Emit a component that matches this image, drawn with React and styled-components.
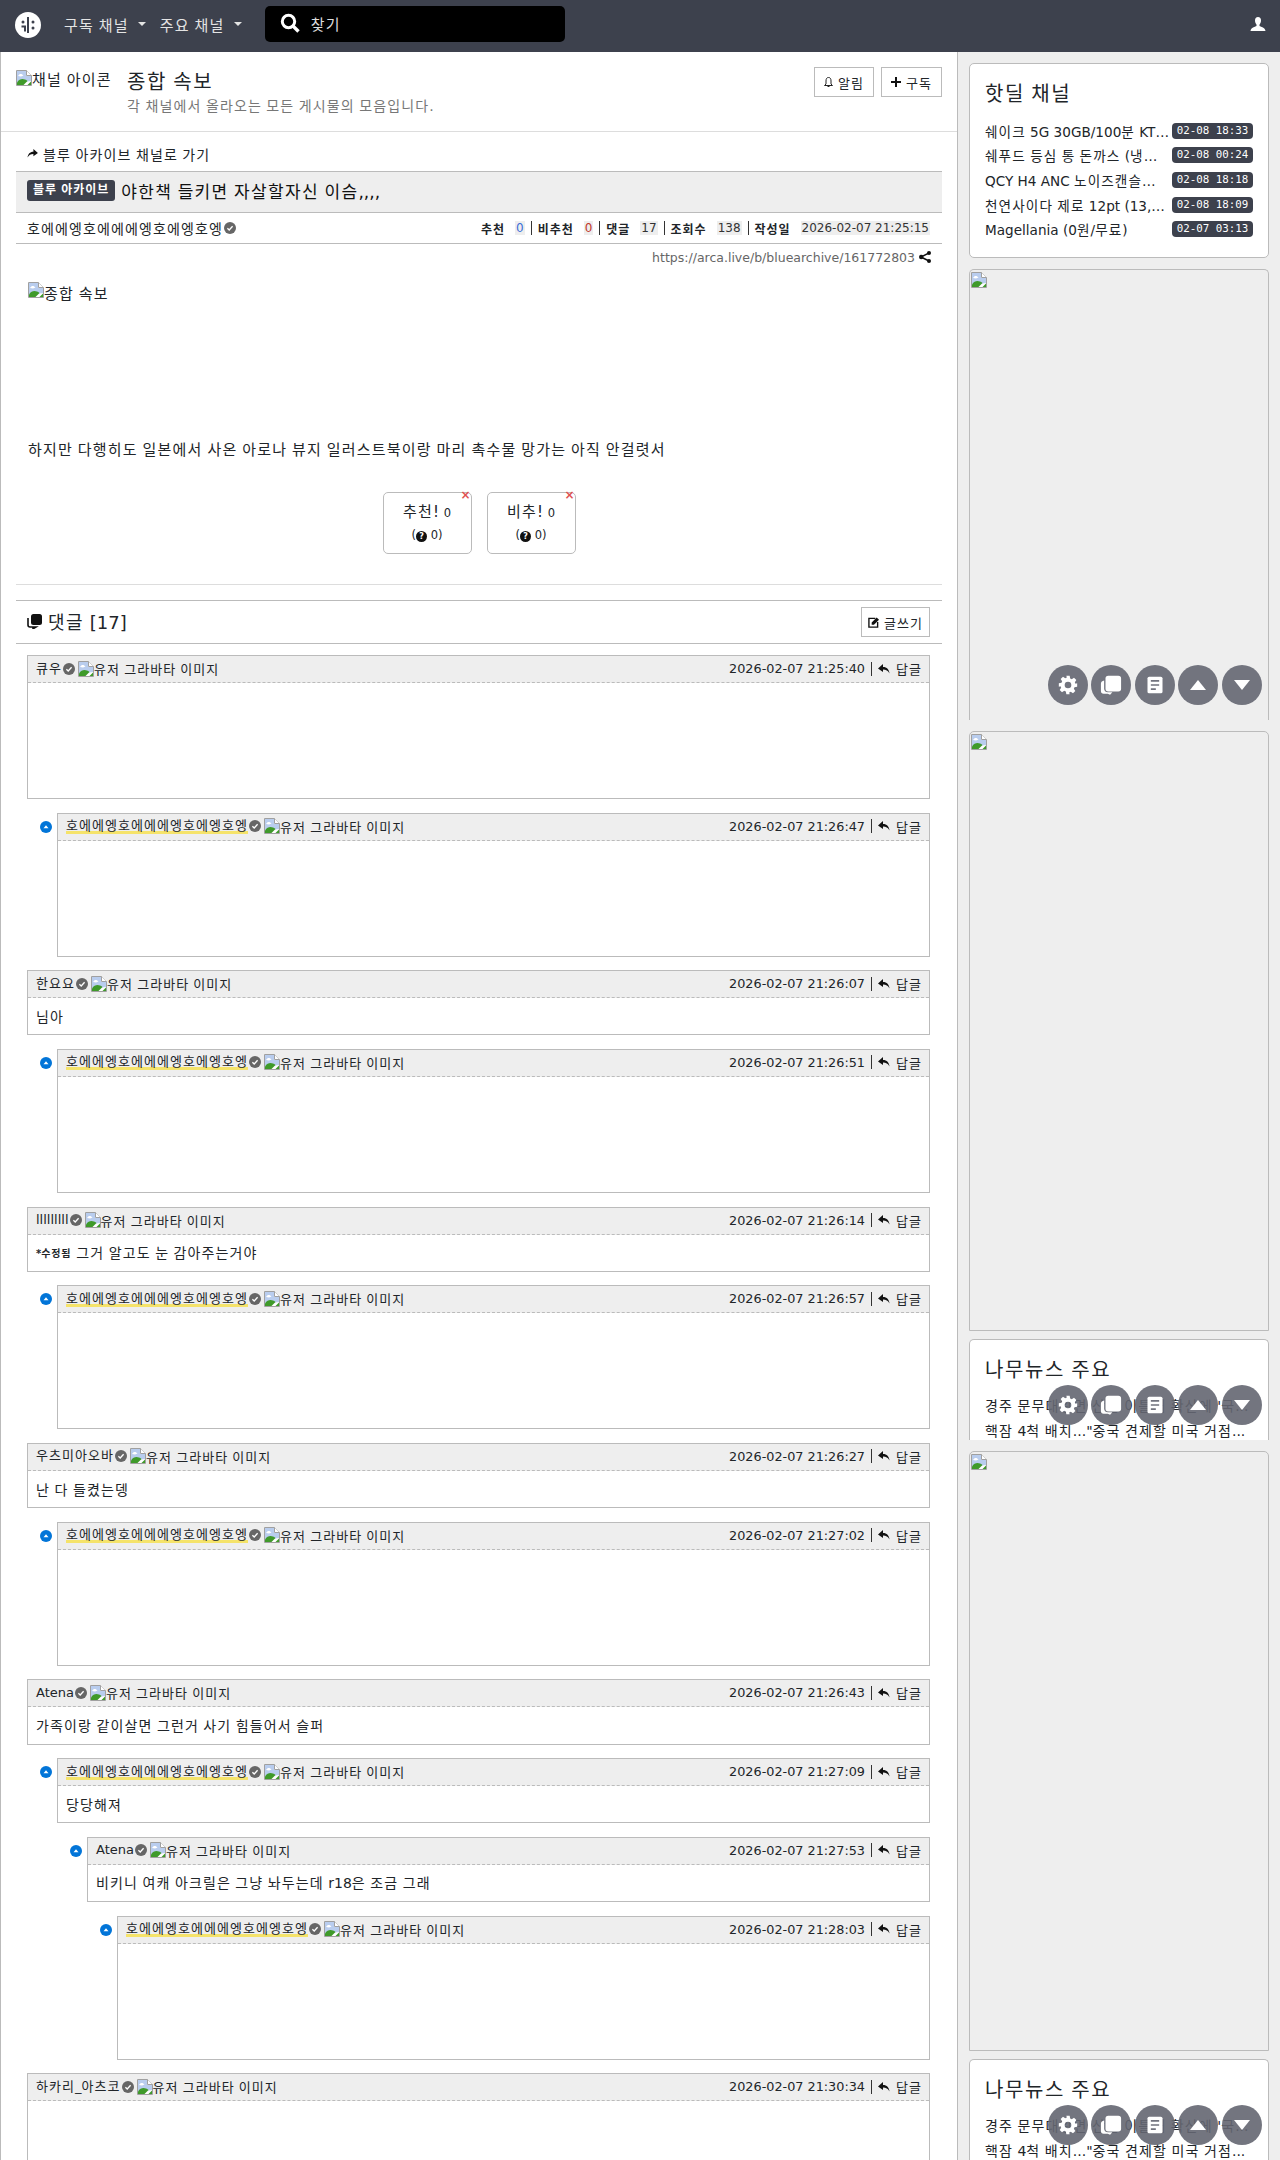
import React from "react"
import styled, { createGlobalStyle } from "styled-components"

const GlobalStyle = createGlobalStyle`
  html, body {
    margin: 0;
    padding: 0;
    background: #eee;
  }
  body {
    font-family: "DejaVu Sans", "Noto Sans CJK KR", sans-serif;
    font-size: 14px;
    color: #212529;
    overflow: hidden;
  }
  * {
    box-sizing: border-box;
  }
`

const hotdeals = [
  { title: "쉐이크 5G 30GB/100분 KT 알뜰폰 요금제", date: "02-08 18:33" },
  { title: "쉐푸드 등심 통 돈까스 (냉동) 2kg 특가", date: "02-08 00:24" },
  { title: "QCY H4 ANC 노이즈캔슬링 헤드폰 직구", date: "02-08 18:18" },
  { title: "천연사이다 제로 12pt (13,900원/무료)", date: "02-08 18:09" },
  { title: "Magellania (0원/무료)", date: "02-07 03:13" },
]

const comments = [
  { name: "큐우", date: "2026-02-07 21:25:40", depth: 0 },
  { name: "호에에엥호에에에엥호에엥호엥", date: "2026-02-07 21:26:47", depth: 1, me: true },
  { name: "한요요", date: "2026-02-07 21:26:07", depth: 0, text: "님아" },
  { name: "호에에엥호에에에엥호에엥호엥", date: "2026-02-07 21:26:51", depth: 1, me: true },
  { name: "lllllllll", date: "2026-02-07 21:26:14", depth: 0, text: "그거 알고도 눈 감아주는거야", edited: true },
  { name: "호에에엥호에에에엥호에엥호엥", date: "2026-02-07 21:26:57", depth: 1, me: true },
  { name: "우츠미아오바", date: "2026-02-07 21:26:27", depth: 0, text: "난 다 들켰는뎅" },
  { name: "호에에엥호에에에엥호에엥호엥", date: "2026-02-07 21:27:02", depth: 1, me: true },
  { name: "Atena", date: "2026-02-07 21:26:43", depth: 0, text: "가족이랑 같이살면 그런거 사기 힘들어서 슬퍼" },
  { name: "호에에엥호에에에엥호에엥호엥", date: "2026-02-07 21:27:09", depth: 1, me: true, text: "당당해져" },
  { name: "Atena", date: "2026-02-07 21:27:53", depth: 2, text: "비키니 여캐 아크릴은 그냥 놔두는데 r18은 조금 그래" },
  { name: "호에에엥호에에에엥호에엥호엥", date: "2026-02-07 21:28:03", depth: 3, me: true },
  { name: "하카리_아츠코", date: "2026-02-07 21:30:34", depth: 0 },
]

// the hangul in the screenshot sits on a full em, Noto's is narrower
const Ko = ({ children }) => (
  <span>
    {children.split(/([가-힣]+)/).map((part, i) =>
      i % 2 ? <Hangul key={i}>{part}</Hangul> : part
    )}
  </span>
)

const BrokenImage = () => (
  <BrokenIcon viewBox="0 0 16 16">
    <path d="M0.5 0.5H10.5L15.5 5.5V15.5H0.5Z" fill="#fff" stroke="#a0a0a0" />
    <path d="M1 1H10V6H15V11L1 13Z" fill="#b9cdee" />
    <path d="M2 6C3.5 3 6 3.5 7.5 5.5L5 6.5Z" fill="#fff" />
    <path d="M1 15V12.5C4 8 8 8.5 11.5 11L7.5 15Z" fill="#3f9a2a" />
    <path d="M11.5 15L15 11.5V15Z" fill="#3f9a2a" />
    <path d="M10.5 0.5V5.5H15.5" fill="#fff" stroke="#a0a0a0" />
  </BrokenIcon>
)

const VerifiedIcon = () => (
  <CheckIcon viewBox="0 0 12 12">
    <circle cx="6" cy="6" r="6" fill="#666" />
    <path d="M3.4 6.2L5.2 8L8.6 4.2" fill="none" stroke="#fff" strokeWidth="1.3" />
  </CheckIcon>
)

const Floating = () => (
  <FloatBar>
    <FloatButton>
      <svg width="20" height="20" viewBox="0 0 24 24">
        <path
          fill="#fff"
          fillRule="evenodd"
          d="M10 1h4l.6 3.2 1.9.8 2.7-1.8 2.8 2.8-1.8 2.7.8 1.9L23 10v4l-3.2.6-.8 1.9 1.8 2.7-2.8 2.8-2.7-1.8-1.9.8L14 23h-4l-.6-3.2-1.9-.8-2.7 1.8-2.8-2.8 1.8-2.7-.8-1.9L1 14v-4l3.2-.6.8-1.9-1.8-2.7 2.8-2.8 2.7 1.8 1.9-.8zM12 8a4 4 0 1 0 0 8 4 4 0 0 0 0-8z"
        />
      </svg>
    </FloatButton>
    <FloatButton>
      <svg width="22" height="22" viewBox="0 0 24 24">
        <rect x="6" y="2" width="17" height="17" rx="3" fill="#fff" />
        <path d="M4.5 7v9c0 2 1.5 4 4 4h5l-2.5 2.5-2.5-1H4c-2 0-3-1-3-3v-8c0-2 1.5-3 3.5-3.5z" fill="#fff" />
      </svg>
    </FloatButton>
    <FloatButton>
      <svg width="20" height="20" viewBox="0 0 24 24">
        <rect x="3" y="2" width="18" height="20" rx="2" fill="#fff" />
        <path d="M7 7h10M7 12h10M7 17h6" stroke="#72747f" strokeWidth="2" />
      </svg>
    </FloatButton>
    <FloatButton>
      <svg width="18" height="12" viewBox="0 0 18 12">
        <path d="M9 1L17 11H1Z" fill="#fff" />
      </svg>
    </FloatButton>
    <FloatButton>
      <svg width="18" height="12" viewBox="0 0 18 12">
        <path d="M1 1H17L9 11Z" fill="#fff" />
      </svg>
    </FloatButton>
  </FloatBar>
)

const ReplyHead = ({ date }) => (
  <HeadRight>
    <DateText>{date}</DateText>
    <Divider />
    <svg width="12" height="10" viewBox="0 0 12 10">
      <path d="M5 0L0 4.5L5 8V5.5C8 5.5 10 6.5 11.5 9.5C11 5.5 9 3 5 3Z" fill="#111" />
    </svg>
    <Ko>답글</Ko>
  </HeadRight>
)

const Comment = ({ comment }) => (
  <CommentRow $depth={comment.depth}>
    {comment.depth > 0 && (
      <Bullet viewBox="0 0 12 12">
        <circle cx="6" cy="6" r="6" fill="#0275d8" />
        <path d="M3.5 7.3L6 4.3L8.5 7.3Z" fill="#fff" />
      </Bullet>
    )}
    <CommentBox>
      <CommentHead>
        <HeadLeft>
          <UserName $me={comment.me}>
            <Ko>{comment.name}</Ko>
          </UserName>
          <VerifiedIcon />
          <Avatar>
            <BrokenImage />
            <Ko>유저 그라바타 이미지</Ko>
          </Avatar>
        </HeadLeft>
        <ReplyHead date={comment.date} />
      </CommentHead>
      <CommentBody $blank={!comment.text}>
        {comment.edited && <Edited><Ko>*수정됨</Ko></Edited>}
        {comment.text && <Ko>{comment.text}</Ko>}
      </CommentBody>
    </CommentBox>
  </CommentRow>
)

const NewsCard = ({ children }) => (
  <Card $clip $height={101}>
    <CardTitle><Ko>나무뉴스 주요</Ko></CardTitle>
    <NewsItem><Ko>경주 문무대왕면 산불 이틀째 확산에 '국...</Ko></NewsItem>
    <NewsItem><Ko>핵잠 4척 배치..."중국 견제할 미국 거점...</Ko></NewsItem>
    {children}
  </Card>
)

export default function App() {
  return (
    <Page>
      <GlobalStyle />
      <Nav>
        <Logo viewBox="0 0 26 26">
          <circle cx="13" cy="13" r="13" fill="#fff" />
          <path d="M13 5v16" stroke="#3d414d" strokeWidth="2" />
          <path d="M6.5 14.5h3.5v5" fill="none" stroke="#3d414d" strokeWidth="2" />
          <circle cx="8" cy="10" r="1.5" fill="#3d414d" />
          <circle cx="18" cy="10" r="1.5" fill="#3d414d" />
          <circle cx="18" cy="16" r="1.5" fill="#3d414d" />
        </Logo>
        <NavMenu><Ko>구독 채널</Ko><Caret /></NavMenu>
        <NavMenu><Ko>주요 채널</Ko><Caret /></NavMenu>
        <Search>
          <svg width="20" height="20" viewBox="0 0 20 20">
            <circle cx="8.5" cy="8.5" r="6.2" fill="none" stroke="#fff" strokeWidth="3" />
            <path d="M13 13L18.5 18.5" stroke="#fff" strokeWidth="3.4" />
          </svg>
          <Ko>찾기</Ko>
        </Search>
        <UserIcon viewBox="0 0 16 14">
          <path
            d="M8 0C10 0 11 1.5 11 3.5C11 5.5 10 7 9.5 7.5V9C11 10 15 10 15.5 14H0.5C1 10 5 10 6.5 9V7.5C6 7 5 5.5 5 3.5C5 1.5 6 0 8 0Z"
            fill="#fff"
          />
        </UserIcon>
      </Nav>
      <Columns>
        <Main>
          <ChannelHeader>
            <ChannelIcon>
              <BrokenImage />
              <Ko>채널 아이콘</Ko>
            </ChannelIcon>
            <ChannelText>
              <ChannelTitle><Ko>종합 속보</Ko></ChannelTitle>
              <ChannelDesc><Ko>각 채널에서 올라오는 모든 게시물의 모음입니다.</Ko></ChannelDesc>
            </ChannelText>
            <ChannelButtons>
              <OutlineButton $pad={9}>
                <svg width="9" height="11" viewBox="0 0 9 11">
                  <path
                    d="M4.5 .5C6.5 .5 7 2 7 4V7L8.5 8.5H.5L2 7V4C2 2 2.5 .5 4.5 .5ZM3.5 9.5H5.5"
                    fill="none"
                    stroke="#222"
                  />
                </svg>
                <Ko>알림</Ko>
              </OutlineButton>
              <OutlineButton $pad={9}>
                <svg width="10" height="10" viewBox="0 0 10 10">
                  <path d="M5 0V10M0 5H10" stroke="#111" strokeWidth="2" />
                </svg>
                <Ko>구독</Ko>
              </OutlineButton>
            </ChannelButtons>
          </ChannelHeader>
          <Article>
            <BackLink>
              <svg width="11" height="9" viewBox="0 0 12 10">
                <path d="M7 0L12 4.5L7 8V5.5C4 5.5 2 6.5 .5 9.5C1 5.5 3 3 7 3Z" fill="#111" />
              </svg>
              <Ko>블루 아카이브 채널로 가기</Ko>
            </BackLink>
            <TitleBar>
              <Badge><Ko>블루 아카이브</Ko></Badge>
              <ArticleTitle><Ko>야한책 들키면 자살할자신 이슴,,,,</Ko></ArticleTitle>
            </TitleBar>
            <InfoRow>
              <Author>
                <Ko>호에에엥호에에에엥호에엥호엥</Ko>
                <VerifiedIcon />
              </Author>
              <Stats>
                <StatLabel><Ko>추천</Ko></StatLabel>
                <StatValue $color="#3d6fd8">0</StatValue>
                <Divider />
                <StatLabel><Ko>비추천</Ko></StatLabel>
                <StatValue $color="#c0392b">0</StatValue>
                <Divider />
                <StatLabel><Ko>댓글</Ko></StatLabel>
                <StatValue>17</StatValue>
                <Divider />
                <StatLabel><Ko>조회수</Ko></StatLabel>
                <StatValue>138</StatValue>
                <Divider />
                <StatLabel><Ko>작성일</Ko></StatLabel>
                <StatValue>2026-02-07 21:25:15</StatValue>
              </Stats>
            </InfoRow>
            <UrlRow>
              https://arca.live/b/bluearchive/161772803
              <svg width="12" height="12" viewBox="0 0 12 12">
                <circle cx="2.2" cy="6" r="2.2" fill="#111" />
                <circle cx="10" cy="2" r="2" fill="#111" />
                <circle cx="10" cy="10" r="2" fill="#111" />
                <path d="M2 6L10 2M2 6L10 10" stroke="#111" strokeWidth="1.4" />
              </svg>
            </UrlRow>
            <ArticleBody>
              <ArticleImage>
                <BrokenImage />
                <Ko>종합 속보</Ko>
              </ArticleImage>
              <ArticleText>
                <Ko>하지만 다행히도 일본에서 사온 아로나 뷰지 일러스트북이랑 마리 촉수물 망가는 아직 안걸렷서</Ko>
              </ArticleText>
            </ArticleBody>
            <Votes>
              <VoteButton>
                <CloseMark>×</CloseMark>
                <VoteMain><Ko>추천!</Ko> <small>0</small></VoteMain>
                <VoteSub>(<HelpDot>?</HelpDot> 0)</VoteSub>
              </VoteButton>
              <VoteButton>
                <CloseMark>×</CloseMark>
                <VoteMain><Ko>비추!</Ko> <small>0</small></VoteMain>
                <VoteSub>(<HelpDot>?</HelpDot> 0)</VoteSub>
              </VoteButton>
            </Votes>
            <Rule />
            <CommentTitleBar>
              <CommentTitle>
                <svg width="15" height="15" viewBox="0 0 15 15">
                  <rect x="4" y="0" width="11" height="11" rx="2.5" fill="#111" />
                  <path d="M1 4V11C1 12 2 13 3 13H9L6 14.8V13" fill="none" stroke="#111" strokeWidth="1.6" />
                </svg>
                <Ko>댓글 [17]</Ko>
              </CommentTitle>
              <OutlineButton $pad={6}>
                <svg width="11" height="11" viewBox="0 0 12 12">
                  <path d="M8 1.5H1V11H10.5V5.5" fill="none" stroke="#111" strokeWidth="1.5" />
                  <path d="M4 8.5V6L9.5 .5L12 3L6.5 8.5Z" fill="#111" />
                </svg>
                <Ko>글쓰기</Ko>
              </OutlineButton>
            </CommentTitleBar>
            <CommentList>
              {comments.map((comment, i) => (
                <Comment key={i} comment={comment} />
              ))}
            </CommentList>
          </Article>
        </Main>
        <Sidebar>
          <Card>
            <CardTitle><Ko>핫딜 채널</Ko></CardTitle>
            {hotdeals.map(deal => (
              <DealRow key={deal.date}>
                <DealTitle><Ko>{deal.title}</Ko></DealTitle>
                <DealDate>{deal.date}</DealDate>
              </DealRow>
            ))}
          </Card>
          <AdCard $height={451} $open>
            <BrokenImage />
            <Floating />
          </AdCard>
          <AdCard $height={600} $tight>
            <BrokenImage />
          </AdCard>
          <NewsCard>
            <Floating />
          </NewsCard>
          <AdCard $height={600} $tight>
            <BrokenImage />
          </AdCard>
          <NewsCard>
            <Floating />
          </NewsCard>
        </Sidebar>
      </Columns>
    </Page>
  )
}

const Hangul = styled.span`
  letter-spacing: 0.08em;
`

const Page = styled.div`
  width: 1280px;
  height: 2160px;
  overflow: hidden;
`

const Nav = styled.div`
  height: 52px;
  background: #3d414d;
  display: flex;
  align-items: center;
  padding: 0 14px 4px 15px;
`

const Logo = styled.svg`
  width: 26px;
  height: 26px;
  margin: 2px 23px 0 0;
`

const NavMenu = styled.div`
  color: #e4e4e4;
  font-size: 15px;
  display: flex;
  align-items: center;
  margin: 0 14px 0 0;
`

const Caret = styled.span`
  margin-left: 9px;
  border-top: 4px solid #e4e4e4;
  border-left: 4px solid transparent;
  border-right: 4px solid transparent;
`

const Search = styled.div`
  width: 300px;
  height: 36px;
  margin-left: 9px;
  padding: 0 0 2px 15px;
  background: #000;
  border-radius: 5px;
  color: #ddd;
  font-size: 15px;
  display: flex;
  align-items: center;
  gap: 11px;
`

const UserIcon = styled.svg`
  width: 16px;
  height: 14px;
  margin-left: auto;
`

const Columns = styled.div`
  display: flex;
  align-items: flex-start;
`

const Main = styled.div`
  width: 958px;
  height: 2108px;
  flex: none;
  background: #fff;
  border-left: 1px solid #bbb;
  border-right: 1px solid #bbb;
`

const ChannelHeader = styled.div`
  height: 80px;
  padding: 15px 15px 0;
  border-bottom: 1px solid #ddd;
  display: flex;
  align-items: flex-start;
`

const ChannelIcon = styled.div`
  width: 96px;
  height: 24px;
  flex: none;
  margin-top: -1px;
  overflow: hidden;
  white-space: nowrap;
  font-size: 15px;
  display: flex;
  align-items: center;
`

const ChannelText = styled.div`
  margin-left: 15px;
  padding-top: 1px;
`

const ChannelTitle = styled.div`
  font-size: 20px;
  line-height: 28px;
`

const ChannelDesc = styled.div`
  line-height: 20px;
  color: #777;
`

const ChannelButtons = styled.div`
  margin-left: auto;
  display: flex;
  gap: 7px;
`

const OutlineButton = styled.div`
  height: 30px;
  padding: 0 ${props => props.$pad}px;
  border: 1px solid #bbb;
  background: #fff;
  font-size: 13px;
  display: flex;
  align-items: center;
  gap: 5px;
`

const Article = styled.div`
  padding: 0 15px;
`

const BackLink = styled.div`
  height: 39px;
  padding: 4px 0 0 11px;
  display: flex;
  align-items: center;
  gap: 5px;
`

const TitleBar = styled.div`
  height: 42px;
  padding: 0 11px 4px;
  background: #eee;
  border-top: 1px solid #bbb;
  border-bottom: 1px solid #bbb;
  display: flex;
  align-items: center;
  gap: 6px;
`

const Badge = styled.span`
  background: #3d414d;
  color: #fff;
  font-size: 12px;
  font-weight: 700;
  line-height: 21px;
  padding: 0 6px;
  border-radius: 3px;
`

const ArticleTitle = styled.span`
  font-size: 17px;
  color: #111;
`

const InfoRow = styled.div`
  height: 31px;
  padding: 0 12px 0 11px;
  border-bottom: 1px solid #bbb;
  display: flex;
  align-items: center;
  justify-content: space-between;
`

const Author = styled.div`
  display: flex;
  align-items: center;
  gap: 1px;
`

const Stats = styled.div`
  font-size: 12px;
  display: flex;
  align-items: center;
  gap: 6px;
`

const StatLabel = styled.b`
  margin-right: 4px;
`

const StatValue = styled.span`
  background: #eee;
  padding: 0 1px;
  color: ${props => props.$color || "#333"};
`

const Divider = styled.span`
  width: 1px;
  height: 14px;
  background: #333;
  display: inline-block;
`

const UrlRow = styled.div`
  height: 26px;
  padding-right: 11px;
  font-size: 12.5px;
  color: #666;
  display: flex;
  align-items: center;
  justify-content: flex-end;
  gap: 4px;
`

const ArticleBody = styled.div`
  padding: 12px 12px 0;
  font-size: 15px;
`

const ArticleImage = styled.div`
  height: 156px;
  display: flex;
  align-items: flex-start;
`

const ArticleText = styled.div`
  line-height: 24px;
`

const BrokenIcon = styled.svg`
  width: 16px;
  height: 16px;
  flex: none;
`

const CheckIcon = styled.svg`
  width: 12px;
  height: 12px;
  flex: none;
`

const Votes = styled.div`
  margin-top: 30px;
  display: flex;
  justify-content: center;
  gap: 15px;
`

const VoteButton = styled.div`
  position: relative;
  width: 89px;
  height: 62px;
  border: 1px solid #bbb;
  border-radius: 5px;
  text-align: center;
  padding-top: 7px;
`

const CloseMark = styled.span`
  position: absolute;
  top: -5px;
  right: 0;
  color: #e05050;
  font-size: 12px;
  font-weight: 700;
  line-height: 14px;
`

const VoteMain = styled.div`
  font-size: 15px;
  line-height: 24px;
  small {
    font-size: 11.5px;
  }
`

const VoteSub = styled.div`
  font-size: 11.5px;
  line-height: 20px;
`

const HelpDot = styled.span`
  display: inline-block;
  width: 11px;
  height: 11px;
  border-radius: 50%;
  background: #111;
  color: #fff;
  font-size: 8px;
  line-height: 11px;
  font-weight: 700;
`

const Rule = styled.div`
  height: 1px;
  margin-top: 30px;
  background: #ddd;
`

const CommentTitleBar = styled.div`
  height: 44px;
  margin-top: 15px;
  padding: 0 12px 0 11px;
  border-top: 1px solid #bbb;
  border-bottom: 1px solid #bbb;
  display: flex;
  align-items: center;
  justify-content: space-between;
`

const CommentTitle = styled.div`
  font-size: 18px;
  padding-bottom: 2px;
  display: flex;
  align-items: center;
  gap: 6px;
`

const CommentList = styled.div`
  padding: 11px 12px 0 11px;
  display: flex;
  flex-direction: column;
  gap: 13.6px;
`

const CommentRow = styled.div`
  margin-left: ${props => props.$depth * 30}px;
  position: relative;
`

const Bullet = styled.svg`
  position: absolute;
  left: -17px;
  top: 8px;
  width: 12px;
  height: 12px;
`

const CommentBox = styled.div`
  border: 1px solid #bbb;
  background: #fff;
`

const CommentHead = styled.div`
  height: 27px;
  padding: 0 7px 1px 8px;
  background: #eee;
  border-bottom: 1px dashed #bbb;
  font-size: 13px;
  display: flex;
  align-items: center;
  justify-content: space-between;
`

const HeadLeft = styled.div`
  display: flex;
  align-items: center;
  gap: 1px;
`

const HeadRight = styled.div`
  display: flex;
  align-items: center;
  gap: 6px;
`

const DateText = styled.span`
  font-size: 12.8px;
`

const UserName = styled.span`
  line-height: 16px;
  box-shadow: ${props => (props.$me ? "inset 0 -3px #f5e36a" : "none")};
`

const Avatar = styled.span`
  margin-left: 2px;
  display: flex;
  align-items: center;
`

const CommentBody = styled.div`
  height: ${props => (props.$blank ? 115 : 36.2)}px;
  padding: 0 8px 1px;
  display: flex;
  align-items: center;
`

const Edited = styled.b`
  font-size: 10px;
  margin-right: 5px;
`

const Sidebar = styled.div`
  flex: none;
  width: 322px;
  height: 2108px;
  padding: 11px 11px 0;
  display: flex;
  flex-direction: column;
  gap: 11px;
`

const Card = styled.div`
  position: relative;
  flex: none;
  height: ${props => (props.$height ? props.$height + "px" : "auto")};
  padding: 16px 15px 15px;
  background: #fff;
  border: 1px solid #bbb;
  border-bottom: ${props => (props.$clip ? "none" : "1px solid #bbb")};
  border-radius: ${props => (props.$clip ? "5px 5px 0 0" : "5px")};
`

const CardTitle = styled.div`
  font-size: 20px;
  line-height: 28px;
  margin-bottom: 10.6px;
`

const DealRow = styled.div`
  height: 24.6px;
  display: flex;
  align-items: center;
  gap: 3px;
`

const DealTitle = styled.div`
  flex: 1;
  min-width: 0;
  overflow: hidden;
  white-space: nowrap;
  text-overflow: ellipsis;
  font-size: 13.6px;
`

const DealDate = styled.span`
  flex: none;
  width: 81px;
  height: 16px;
  background: #3d414d;
  color: #fff;
  border-radius: 4px;
  font-family: "DejaVu Sans Mono", monospace;
  font-size: 10.8px;
  line-height: 16px;
  text-align: center;
`

const NewsItem = styled.div`
  line-height: 25px;
  white-space: nowrap;
`

const AdCard = styled.div`
  position: relative;
  flex: none;
  height: ${props => props.$height}px;
  margin-bottom: ${props => (props.$tight ? "-3px" : "0")};
  padding: 2px 1px;
  background: #eee;
  border: 1px solid #bbb;
  border-bottom: ${props => (props.$open ? "none" : "1px solid #bbb")};
  border-radius: 5px 5px 0 0;
`

const FloatBar = styled.div`
  position: absolute;
  right: 6px;
  bottom: 15px;
  display: flex;
  gap: 3.6px;
`

const FloatButton = styled.div`
  width: 40px;
  height: 40px;
  border-radius: 50%;
  background: rgba(100, 102, 113, 0.9);
  display: flex;
  align-items: center;
  justify-content: center;
`
